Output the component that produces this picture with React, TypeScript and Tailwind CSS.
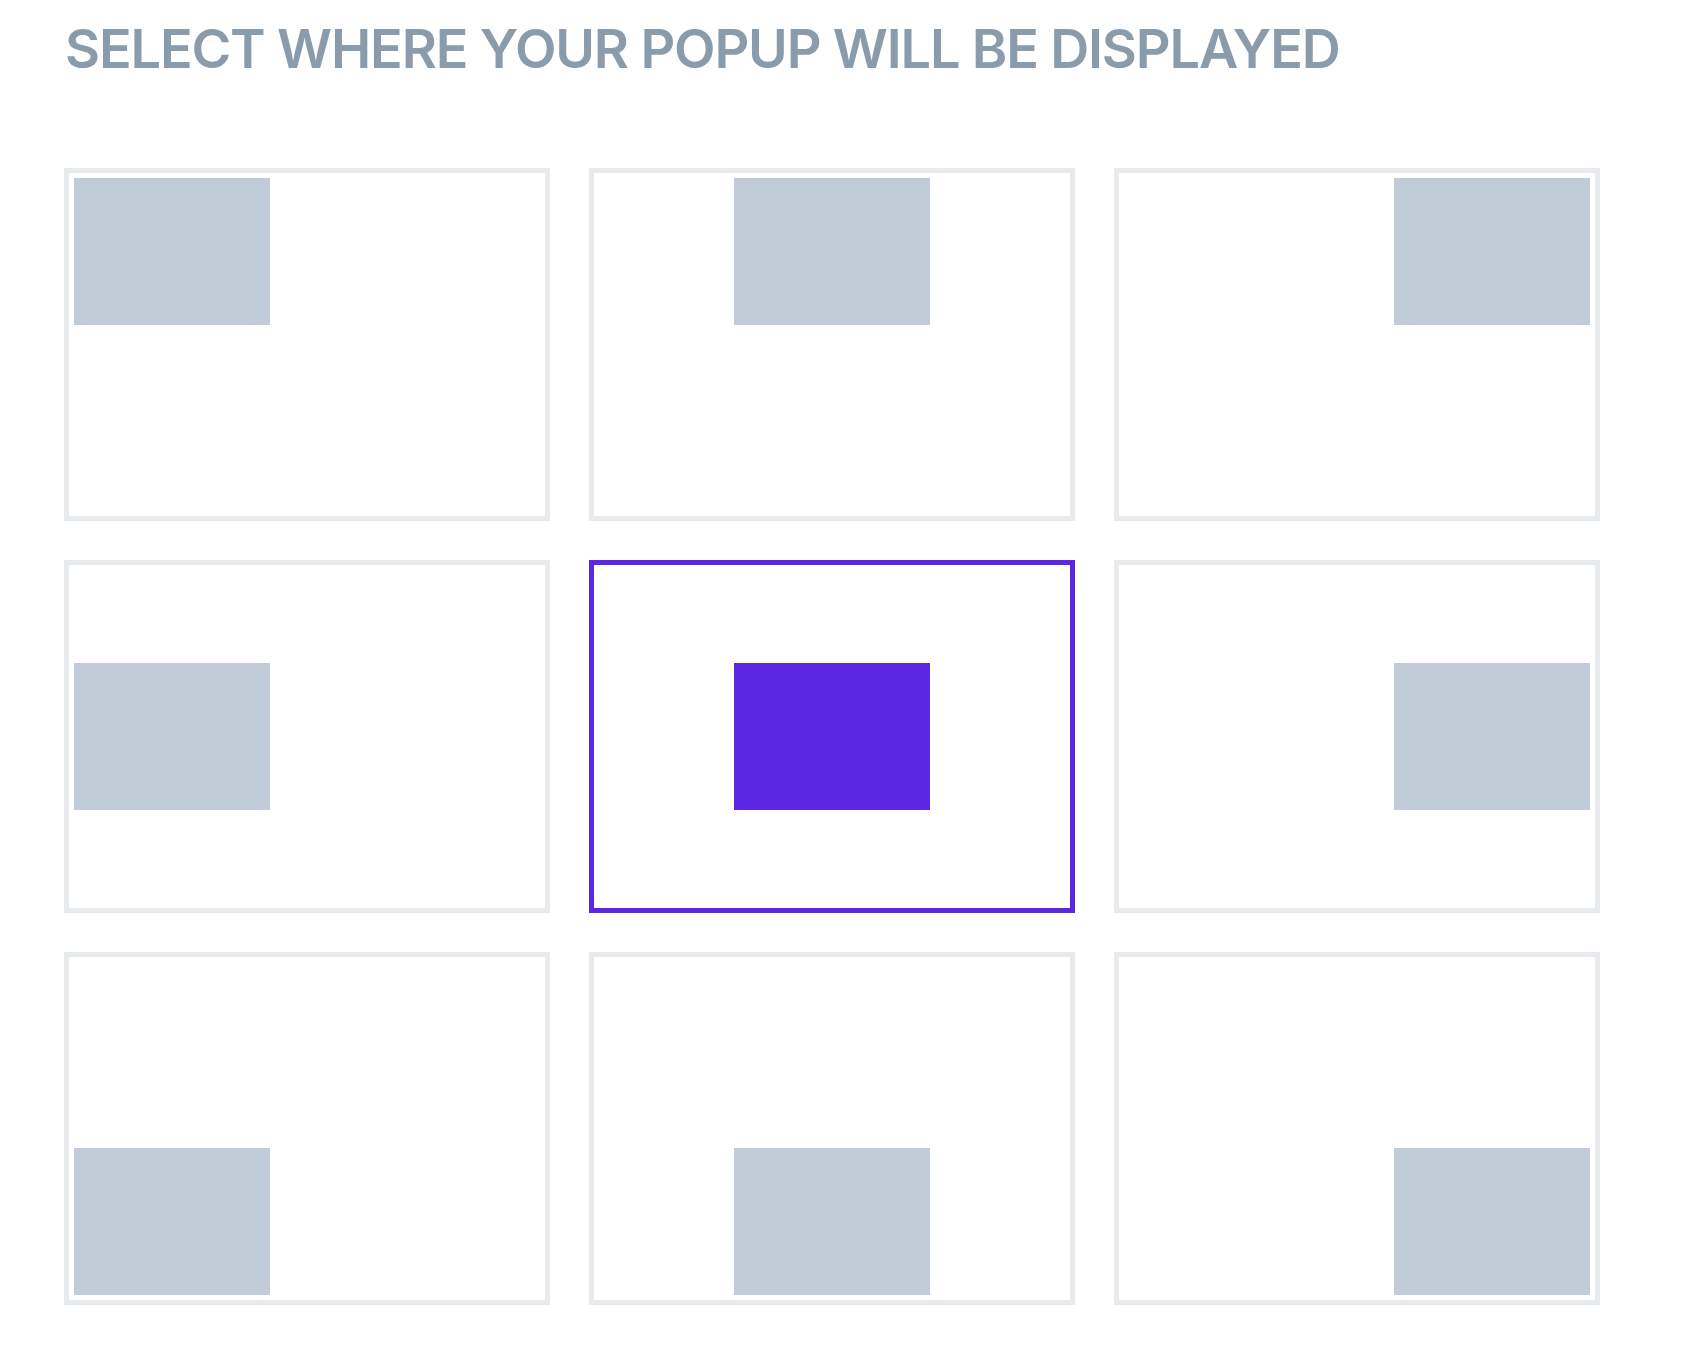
import { useState } from 'react'

type Position = {
  id: string,
  justify: string,
  align: string,
}

const positions: Position[] = [
  { id: 'top-left', justify: 'justify-start', align: 'items-start' },
  { id: 'top-center', justify: 'justify-center', align: 'items-start' },
  { id: 'top-right', justify: 'justify-end', align: 'items-start' },
  { id: 'middle-left', justify: 'justify-start', align: 'items-center' },
  { id: 'middle-center', justify: 'justify-center', align: 'items-center' },
  { id: 'middle-right', justify: 'justify-end', align: 'items-center' },
  { id: 'bottom-left', justify: 'justify-start', align: 'items-end' },
  { id: 'bottom-center', justify: 'justify-center', align: 'items-end' },
  { id: 'bottom-right', justify: 'justify-end', align: 'items-end' },
]

export default function App() {
  const [selected, setSelected] = useState('middle-center')
  return (
    <div className="min-h-screen bg-white px-16 pt-[22px]" style={{ fontFamily: 'Inter, "Liberation Sans", sans-serif' }}>
      <h1 className="text-[54px] leading-[54px] font-semibold text-[#8a9cab] tracking-[-1.15px] pl-[1px]">
        SELECT WHERE YOUR POPUP WILL BE DISPLAYED
      </h1>
      <div className="mt-[92px] grid w-[1536px] grid-cols-3 gap-[39px]">
        {positions.map(p => {
          const active = selected == p.id
          return (
            <button
              key={p.id}
              onClick={() => setSelected(p.id)}
              className={`flex h-[353px] border-[5px] p-[5px] ${p.justify} ${p.align} ${active ? 'border-[#5c27e1]' : 'border-[#e7ebee]'}`}
            >
              <div className={`h-[147px] w-[196px] ${active ? 'bg-[#5c27e1]' : 'bg-[#c1ccd8]'}`}></div>
            </button>
          )
        })}
      </div>
    </div>
  )
}
